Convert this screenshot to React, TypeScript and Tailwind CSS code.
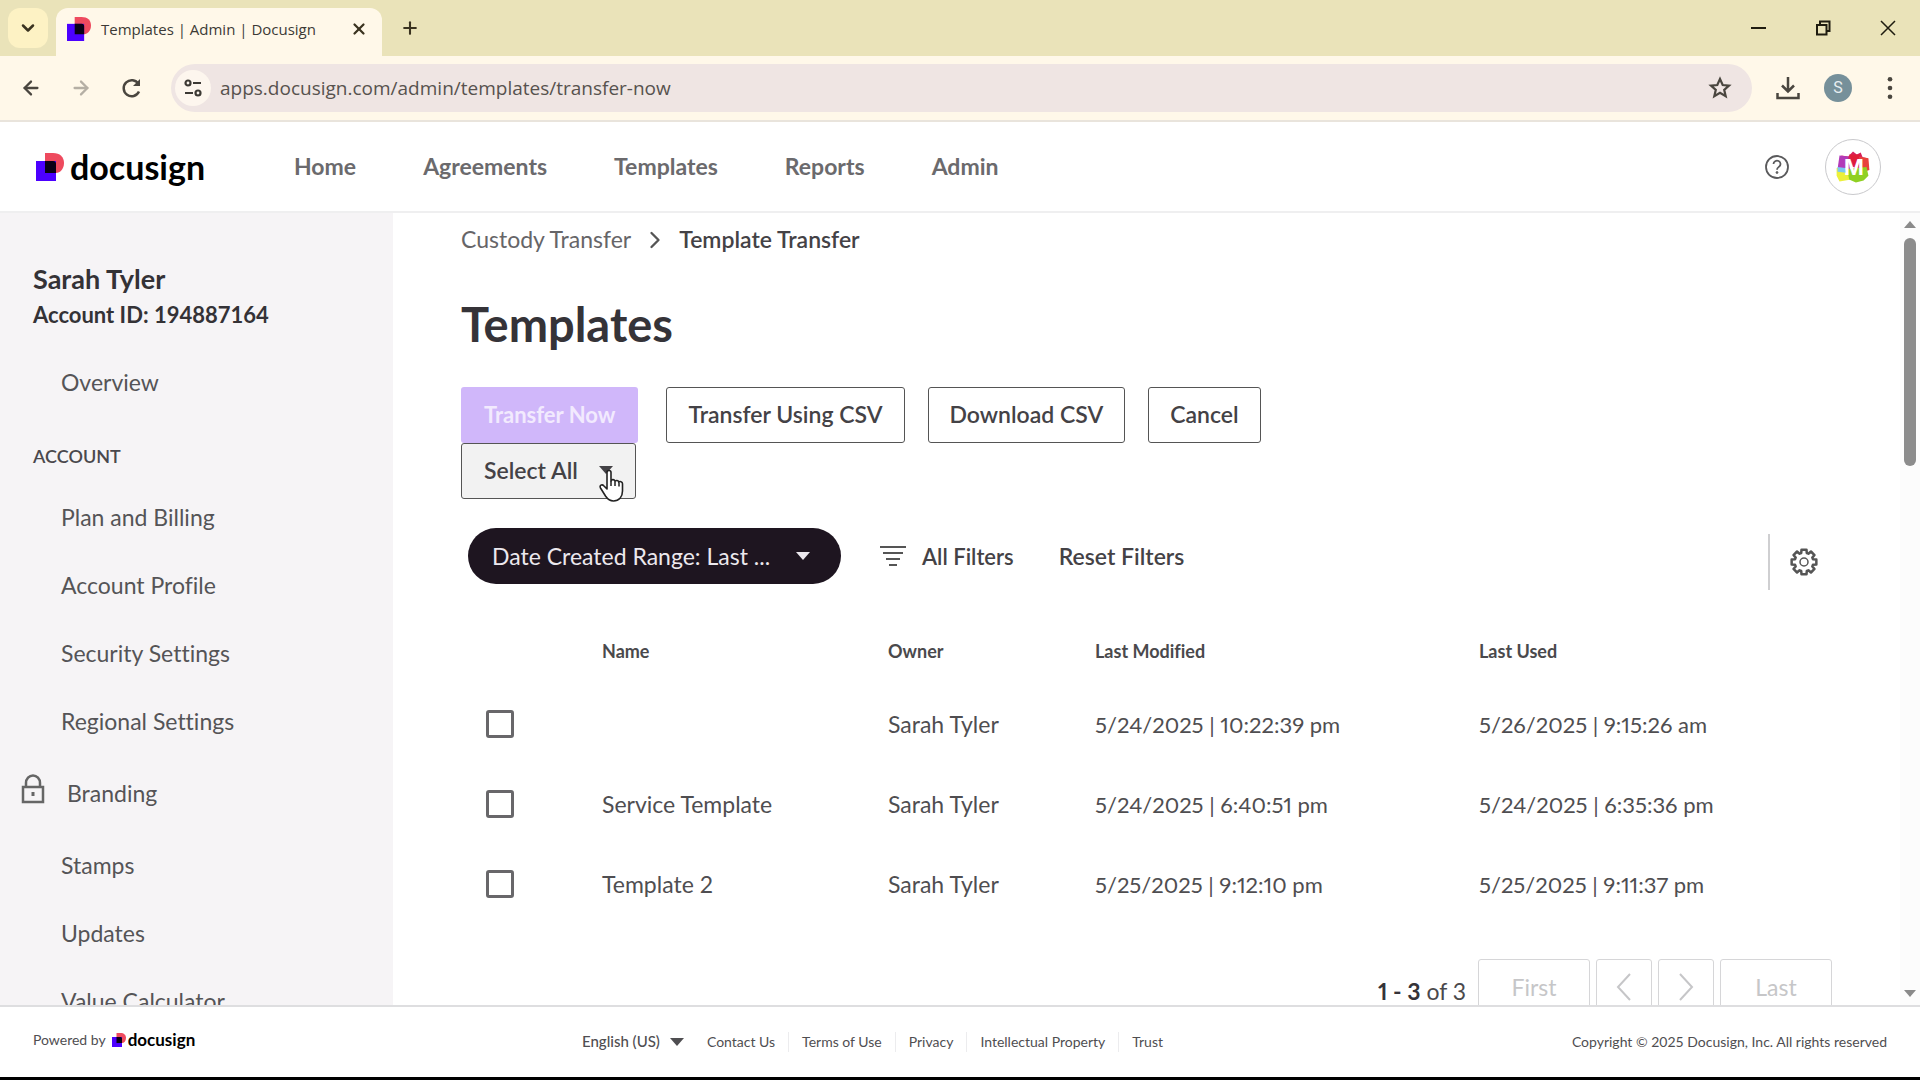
import React from "react";
import { ArrowLeft, ArrowRight, ChevronDown, ChevronRight, Plus, X } from "lucide-react";

const NAV = ["Home", "Agreements", "Templates", "Reports", "Admin"];

const ROWS = [
  { name: "", owner: "Sarah Tyler", modified: "5/24/2025 | 10:22:39 pm", used: "5/26/2025 | 9:15:26 am" },
  { name: "Service Template", owner: "Sarah Tyler", modified: "5/24/2025 | 6:40:51 pm", used: "5/24/2025 | 6:35:36 pm" },
  { name: "Template 2", owner: "Sarah Tyler", modified: "5/25/2025 | 9:12:10 pm", used: "5/25/2025 | 9:11:37 pm" },
];

const LEGAL = ["Contact Us", "Terms of Use", "Privacy", "Intellectual Property", "Trust"];

function LogoMark({ className }: { className: string }) {
  return (
    <svg viewBox="0 0 28 28" className={"shrink-0 " + className} aria-hidden="true">
      <path d="M9 0h8c7 0 11 4 11 10s-4 10-8 10H9z" fill="#ee4a5e" />
      <rect x="0" y="8" width="20" height="20" fill="#4c00ff" />
      <path d="M9 8h8q3 0 3 3v9H9z" fill="#0a0015" />
    </svg>
  );
}

function Caret({ className }: { className: string }) {
  return (
    <svg viewBox="0 0 14 8" className={className} aria-hidden="true">
      <path d="M0 0h14L7 8z" fill="currentColor" />
    </svg>
  );
}

function gearPath() {
  const pts: string[] = [];
  const teeth = 8;
  for (let i = 0; i < teeth; i++) {
    const a = (i * 2 * Math.PI) / teeth - Math.PI / 2;
    const corners: [number, number][] = [
      [-0.3, 9.4],
      [-0.2, 12.6],
      [0.2, 12.6],
      [0.3, 9.4],
    ];
    for (const [off, r] of corners) {
      pts.push(`${(14 + r * Math.cos(a + off)).toFixed(2)} ${(14 + r * Math.sin(a + off)).toFixed(2)}`);
    }
  }
  return `M${pts.join("L")}Z`;
}

function Gear() {
  return (
    <svg viewBox="0 0 28 28" className="size-7" fill="none" stroke="#555" strokeWidth="2.500" strokeLinejoin="round" aria-hidden="true">
      <path d={gearPath()} />
      <circle cx="14" cy="14" r="4" strokeWidth="1.500" />
    </svg>
  );
}

function TabStrip() {
  return (
    <div className="flex h-14 shrink-0 items-center bg-[#eae3b9] text-[#3a3320]">
      <button aria-label="Search tabs" className="ml-2 flex size-10 items-center justify-center rounded-xl bg-[#fdf2c4]">
        <ChevronDown className="size-5" strokeWidth={3} />
      </button>
      <div className="ml-2 flex h-12 w-[326px] items-center self-end rounded-t-xl bg-[#fff8e9] pr-3.5 pb-1.5 pl-[11px]">
        <LogoMark className="size-6" />
        <span className="ml-[10px] font-['Open_Sans',sans-serif] text-[15px] text-[#3c3a36]">Templates | Admin | Docusign</span>
        <button aria-label="Close tab" className="ml-auto">
          <X className="size-[18px]" strokeWidth={3} />
        </button>
      </div>
      <button aria-label="New tab" className="ml-[18px]">
        <Plus className="size-5" strokeWidth={2.5} />
      </button>
      <div className="ml-auto flex items-center gap-[49px] pr-6 text-[#1f1c10]">
        <button aria-label="Minimize">
          <svg viewBox="0 0 16 16" className="size-4" stroke="currentColor" strokeWidth="2"><path d="M1 8h15" /></svg>
        </button>
        <button aria-label="Restore">
          <svg viewBox="0 0 16 16" className="size-4" fill="none" stroke="currentColor" strokeWidth="2">
            <path d="M2 5h9.500v9.500H2zM5 5V1.500h9.500V11H11.500" />
          </svg>
        </button>
        <button aria-label="Close window">
          <svg viewBox="0 0 16 16" className="size-4" stroke="currentColor" strokeWidth="1.500"><path d="M1 1l14 14M15 1L1 15" /></svg>
        </button>
      </div>
    </div>
  );
}

function AddressBar() {
  return (
    <div className="flex h-[66px] shrink-0 items-center border-b-2 border-[#e9e4dc] bg-[#fff8e9] text-[#4a463f]">
      <button aria-label="Back" className="ml-5"><ArrowLeft className="size-[22px]" strokeWidth={2.5} /></button>
      <button aria-label="Forward" className="ml-[28px] text-[#b5afa4]"><ArrowRight className="size-[22px]" strokeWidth={2.5} /></button>
      <button aria-label="Reload" className="ml-[29px]">
        <svg viewBox="0 0 22 22" className="size-[22px]" fill="none" stroke="currentColor" strokeWidth="2.500">
          <path d="M18 14.500A8 8 0 1 1 17.500 7" />
          <path d="M19 2v7h-7z" fill="currentColor" stroke="none" />
        </svg>
      </button>
      <div className="ml-[28px] flex h-12 min-w-0 flex-1 items-center rounded-full bg-[#efe5e3] pr-5 pl-1">
        <button aria-label="Site information" className="flex size-9 items-center justify-center rounded-full bg-[#fdf6ee]">
          <svg viewBox="0 0 20 20" className="size-5" fill="none" stroke="#3c3934" strokeWidth="2.200">
            <circle cx="5" cy="5" r="2.500" /><path d="M10 5h8M2 15h8" /><circle cx="15" cy="15" r="2.500" />
          </svg>
        </button>
        <input
          aria-label="Address"
          defaultValue="apps.docusign.com/admin/templates/transfer-now"
          className="ml-[9px] min-w-0 flex-1 bg-transparent font-['Open_Sans',sans-serif] text-[19px] text-[#57524e] outline-none"
        />
        <button aria-label="Bookmark">
          <svg viewBox="0 0 24 24" className="size-6" fill="none" stroke="currentColor" strokeWidth="2.200">
            <path d="M12 3l2.700 6 6.300.6-4.800 4.200 1.500 6.400L12 16.800l-5.700 3.400 1.500-6.400L3 9.600 9.300 9z" />
          </svg>
        </button>
      </div>
      <button aria-label="Downloads" className="ml-6">
        <svg viewBox="0 0 24 24" className="size-6" fill="none" stroke="currentColor" strokeWidth="2.500">
          <path d="M12 1v14M6 9.500l6 6 6-6M1.500 17v5h21v-5" />
        </svg>
      </button>
      <button aria-label="Profile" className="ml-6 flex size-7 items-center justify-center rounded-full bg-[#76909a] font-['Roboto',sans-serif] text-base text-[#e6eef1]">S</button>
      <button aria-label="Menu" className="mr-4 ml-6">
        <svg viewBox="0 0 24 24" className="size-7" fill="currentColor"><circle cx="12" cy="4.500" r="2" /><circle cx="12" cy="12" r="2" /><circle cx="12" cy="19.500" r="2" /></svg>
      </button>
    </div>
  );
}

function AvatarArt() {
  return (
    <svg viewBox="0 0 56 56" className="size-full" aria-hidden="true">
      <path d="M14 24l2-8 7 1 5-5 4 3 4-2 2 5 5 1 1 8-2 5z" fill="#d8215c" />
      <path d="M12 30l2-14 9 1 2 13z" fill="#b23ab8" />
      <path d="M11 29h10l5 12-12 2-3-6z" fill="#ecf03a" />
      <path d="M34 17l10 2 1 12-8 3z" fill="#e8413c" />
      <path d="M22 30l20-2 2 9-5 5-8 2-7-3z" fill="#8fd022" />
      <path d="M12 28l8 1 1 5-9-1z" fill="#7cc8f0" />
      <path d="M24 15h12l-7 12z" fill="#e01e38" />
      <text x="29" y="36" textAnchor="middle" className="font-['Inter',sans-serif] text-[22px] font-bold" fill="#fff">M</text>
    </svg>
  );
}

function Header() {
  return (
    <header className="flex h-[91px] shrink-0 items-center border-b-2 border-[#efeff0] bg-white">
      <a href="#" aria-label="Docusign home" className="ml-9 flex w-[172px] items-center gap-1.5 text-black">
        <LogoMark className="size-7" />
        <span className="text-[34px] leading-10 font-bold">docusign</span>
      </a>
      <nav className="ml-[86px] flex items-center gap-[67px]">
        {NAV.map((label) => (
          <a key={label} href="#" className="text-[23px] font-bold text-[#6b6a6d]">{label}</a>
        ))}
      </nav>
      <button aria-label="Help" className="mr-9 ml-auto">
        <svg viewBox="0 0 24 24" className="size-6" fill="none" stroke="#5a5a5c" strokeWidth="1.800">
          <circle cx="12" cy="12" r="11" />
          <path d="M8.500 9a3.500 3.300 0 1 1 5.500 2.700c-1.200.9-2 1.400-2 3" />
          <circle cx="12" cy="17.500" r="1" fill="#5a5a5c" strokeWidth="0.800" />
        </svg>
      </button>
      <button aria-label="Account menu" className="mr-[39px] size-14 overflow-hidden rounded-full border border-[#c9c9cc] bg-white">
        <AvatarArt />
      </button>
    </header>
  );
}

function SideLink({ children }: { children: string }) {
  return (
    <a href="#" className="flex h-[68px] shrink-0 items-center pl-[61px]">
      {children}
    </a>
  );
}

function Sidebar() {
  return (
    <aside className="flex w-[393px] shrink-0 flex-col overflow-hidden bg-[#f6f4f6] pt-[47px] text-[23px] text-[#555457]">
      <h2 className="pl-[33px] text-[27px] leading-[38px] font-bold text-[#343236]">Sarah Tyler</h2>
      <p className="pl-[33px] text-[22px] leading-[34px] font-bold text-[#343236]">Account ID: 194887164</p>
      <div className="mt-4 flex shrink-0 flex-col">
        <SideLink>Overview</SideLink>
      </div>
      <h3 className="mt-[26px] mb-[13px] pl-[33px] text-lg leading-7 font-semibold text-[#4a484c]">ACCOUNT</h3>
      <SideLink>Plan and Billing</SideLink>
      <SideLink>Account Profile</SideLink>
      <SideLink>Security Settings</SideLink>
      <SideLink>Regional Settings</SideLink>
      <a href="#" className="flex h-[76px] shrink-0 items-center pl-[21px]">
        <svg viewBox="0 0 24 30" className="mb-2 h-[30px] w-6" fill="none" stroke="#666" strokeWidth="2.500" aria-hidden="true">
          <path d="M2 13h20v15H2zM5 13V9a7 7.500 0 0 1 14 0v4" />
          <path d="M12 18v4" strokeWidth="3" />
        </svg>
        <span className="ml-[22px]">Branding</span>
      </a>
      <SideLink>Stamps</SideLink>
      <SideLink>Updates</SideLink>
      <SideLink>Value Calculator</SideLink>
    </aside>
  );
}

function HandCursor() {
  return (
    <svg viewBox="0 0 28 34" className="pointer-events-none absolute top-[26px] left-[137px] z-10 h-[34px] w-7" aria-hidden="true">
      <path
        d="M9 3.500C9 .8 13 .8 13 3.500V12c.5-2 3.800-1.800 4 .5.700-1.600 3.600-1.300 3.800.8.900-1.300 3.700-.9 3.700 1.500V22c0 6-3.500 10-9 10-4 0-6-2-8-5l-5-8c-1.500-2.700 1.500-4.200 3.500-2L9 20z"
        fill="#fff" stroke="#222" strokeWidth="1.600" strokeLinejoin="round"
      />
      <path d="M13 12v5M17 13v4M21 14v3.500" stroke="#222" strokeWidth="1.500" />
    </svg>
  );
}

function OutlineButton({ children }: { children: string }) {
  return (
    <button className="h-14 rounded-[3px] border border-[#555] bg-white px-[21px] pb-0.5 text-[23px] font-semibold text-[#444246]">
      {children}
    </button>
  );
}

function PageButton({ children, wide, label }: { children: React.ReactNode; wide?: boolean; label: string }) {
  return (
    <button
      disabled
      aria-label={label}
      className={
        (wide ? "w-28" : "w-14") +
        " flex h-14 items-center justify-center rounded-[3px] border border-[#d6d6d8] text-[23px] text-[#c6c6c8]"
      }
    >
      {children}
    </button>
  );
}

function PageArrow({ d }: { d: string }) {
  return (
    <svg viewBox="0 0 16 28" className="h-7 w-4" fill="none" stroke="currentColor" strokeWidth="2" aria-hidden="true">
      <path d={d} />
    </svg>
  );
}

function TemplatesTable() {
  return (
    <table className="mt-7 w-full table-fixed text-left text-[#4f4e51]">
      <colgroup>
        <col className="w-[141px]" />
        <col className="w-[286px]" />
        <col className="w-[207px]" />
        <col className="w-[384px]" />
        <col />
      </colgroup>
      <thead>
        <tr className="h-[66px] text-lg text-[#4a494c]">
          <th aria-label="Selection" />
          <th>Name</th>
          <th>Owner</th>
          <th>Last Modified</th>
          <th>Last Used</th>
        </tr>
      </thead>
      <tbody className="text-[23px]">
        {ROWS.map((row, i) => (
          <tr key={i} className="h-20">
            <td>
              <input
                type="checkbox"
                aria-label={"Select " + (row.name || "untitled template")}
                className="ml-[25px] block size-7 appearance-none rounded-[3px] border-[3px] border-[#68676a] bg-white"
              />
            </td>
            <td>{row.name}</td>
            <td>{row.owner}</td>
            <td className="text-[22px] proportional-nums">{row.modified}</td>
            <td className="text-[22px] proportional-nums">{row.used}</td>
          </tr>
        ))}
      </tbody>
    </table>
  );
}

function Main() {
  return (
    <main className="flex min-w-0 flex-1 flex-col overflow-hidden bg-white pr-[68px] pl-[68px]">
      <div className="flex h-[53px] shrink-0 items-center text-[23px]">
        <a href="#" className="text-[#666568]">Custody Transfer</a>
        <ChevronRight className="mx-[10px] size-7 text-[#555]" />
        <span className="font-semibold text-[#444246]">Template Transfer</span>
      </div>
      <h1 className="mt-7 text-[47px] leading-[60px] font-bold text-[#353338]">Templates</h1>
      <div className="mt-[33px] flex shrink-0">
        <button disabled className="h-14 rounded-[3px] bg-[#d0b7fa] px-[23px] pb-0.5 text-[22px] font-bold text-[#f2eafe]">Transfer Now</button>
        <div className="ml-[28px] flex gap-[23px]">
          <OutlineButton>Transfer Using CSV</OutlineButton>
          <OutlineButton>Download CSV</OutlineButton>
          <OutlineButton>Cancel</OutlineButton>
        </div>
      </div>
      <div className="relative flex">
        <button className="flex h-14 w-[175px] items-center justify-between rounded-[3px] border border-[#555] bg-[#f2f2f2] px-[22px] pb-0.5 text-[23px] font-semibold text-[#444246]">
          Select All
          <Caret className="h-2 w-3.5" />
        </button>
        <HandCursor />
      </div>
      <div className="mt-[29px] flex shrink-0 items-start">
        <button className="ml-[7px] flex h-14 w-[373px] items-center justify-between rounded-full bg-[#1e1520] pr-[31px] pl-6 text-[23px] text-[#ece8ee]">
          Date Created Range: Last ...
          <Caret className="h-2 w-3.5" />
        </button>
        <button className="ml-[39px] flex h-14 items-center gap-4 text-[22px] font-semibold text-[#444246]">
          <svg viewBox="0 0 26 20" className="h-5 w-[26px]" stroke="#555" strokeWidth="2" aria-hidden="true">
            <path d="M0 1h26M3 7h20M6 13h14M9 19h8" />
          </svg>
          All Filters
        </button>
        <button className="ml-[45px] h-14 text-[23px] font-semibold text-[#444246]">Reset Filters</button>
        <button aria-label="Table settings" className="mt-1.5 mr-[14px] ml-auto flex h-14 items-center border-l-2 border-[#cfcfd1] pl-5">
          <Gear />
        </button>
      </div>
      <TemplatesTable />
      <div className="mt-[35px] flex shrink-0 items-start justify-end gap-[6px]">
        <p className="mt-[15px] mr-1.5 text-[23px] text-[#4a494c] proportional-nums"><b className="text-[#353338]">1 - 3</b> of 3</p>
        <PageButton label="First page" wide>First</PageButton>
        <PageButton label="Previous page"><PageArrow d="M14 1L2 14l12 13" /></PageButton>
        <PageButton label="Next page"><PageArrow d="M2 1l12 13L2 27" /></PageButton>
        <PageButton label="Last page" wide>Last</PageButton>
      </div>
    </main>
  );
}

function ScrollRail() {
  return (
    <div className="flex w-5 shrink-0 flex-col items-center bg-[#fcfcfc] py-2 text-[#8a8a8a]">
      <Caret className="h-[7px] w-3 rotate-180" />
      <div className="mt-2.5 h-[228px] w-3 rounded-full bg-[#8c8c8c]" />
      <Caret className="mt-auto h-[7px] w-3" />
    </div>
  );
}

function Footer() {
  return (
    <footer className="flex h-[72px] shrink-0 items-center border-t-2 border-[#dedee0] bg-white px-[33px] text-sm text-[#4f4e51]">
      <div className="flex w-[549px] items-center pb-1">
        <span>Powered by</span>
        <LogoMark className="ml-1.5 size-3.5" />
        <span className="ml-0.5 text-[17px] leading-6 font-bold text-black">docusign</span>
      </div>
      <button className="flex items-center gap-2.5 text-[15px] font-medium text-[#4f4e51]">
        English (US)
        <Caret className="h-2 w-3.5" />
      </button>
      <nav className="ml-[10px] flex items-center divide-x divide-[#ececee]">
        {LEGAL.map((label) => (
          <a key={label} href="#" className="px-[13px]">{label}</a>
        ))}
      </nav>
      <p className="ml-auto">Copyright © 2025 Docusign, Inc. All rights reserved</p>
    </footer>
  );
}

export default function App() {
  return (
    <div className="flex h-screen flex-col overflow-hidden border-b-[3px] border-black bg-white font-['Lato',sans-serif] [font-variant-ligatures:none]">
      <TabStrip />
      <AddressBar />
      <Header />
      <div className="flex min-h-0 flex-1">
        <Sidebar />
        <Main />
        <ScrollRail />
      </div>
      <Footer />
    </div>
  );
}
